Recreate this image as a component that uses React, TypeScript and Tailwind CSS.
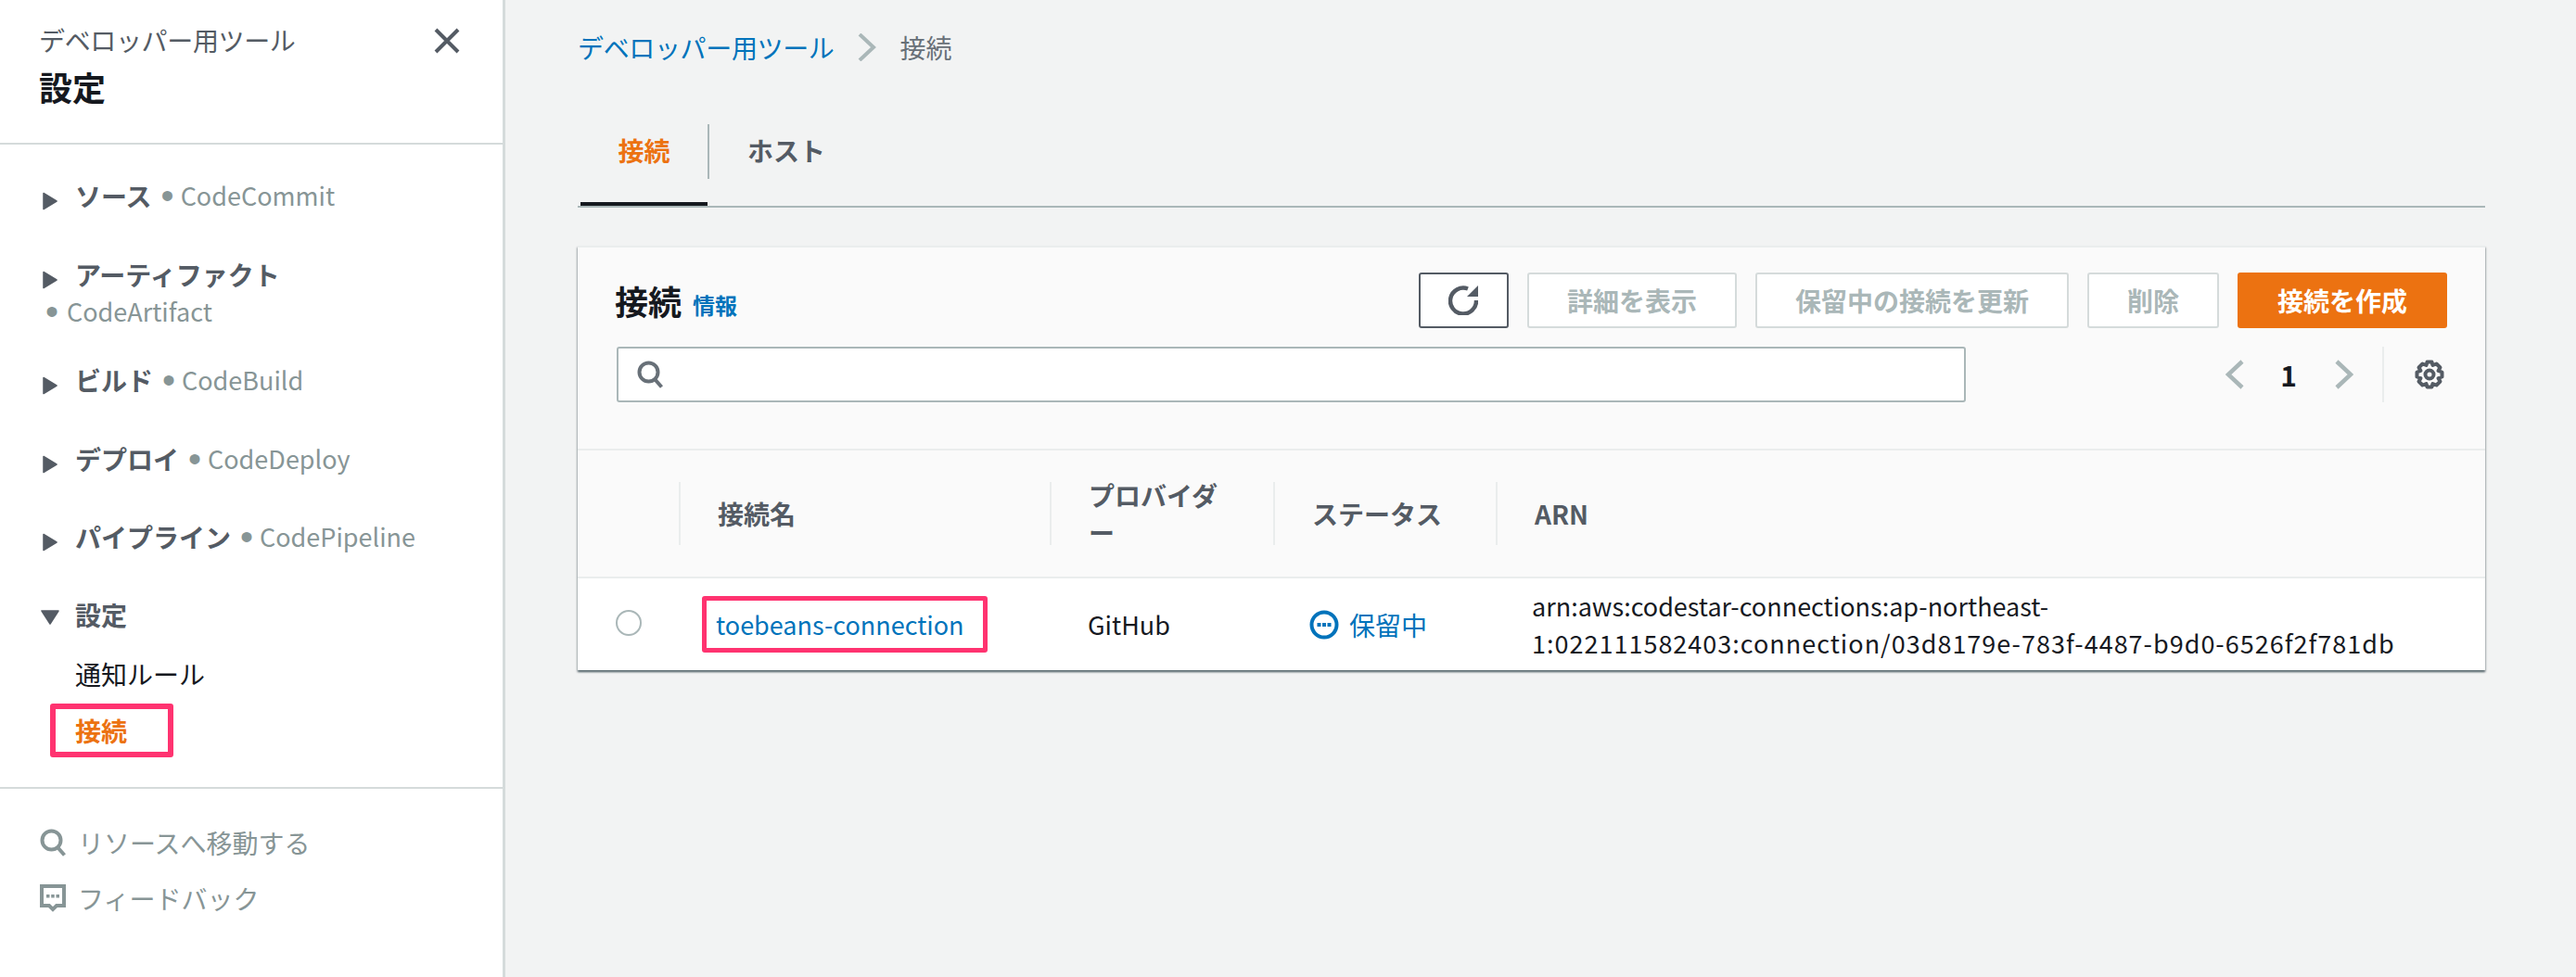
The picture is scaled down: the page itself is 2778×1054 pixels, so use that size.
import React from 'react';

const fontStack = '"Noto Sans CJK JP", "Noto Sans", sans-serif';

const navGroups = [
  { label: 'ソース', service: 'CodeCommit' },
  { label: 'アーティファクト', service: 'CodeArtifact', wrap: true },
  { label: 'ビルド', service: 'CodeBuild' },
  { label: 'デプロイ', service: 'CodeDeploy' },
  { label: 'パイプライン', service: 'CodePipeline' },
];

function CaretRight() {
  return (
    <svg viewBox="0 0 16 20" className="h-[20px] w-[16px] shrink-0 fill-[#545b64] stroke-[#545b64]" strokeWidth="1.5" strokeLinejoin="round">
      <path d="M1 1.5 L15 10 L1 18.5 Z" />
    </svg>
  );
}

function CaretDown() {
  return (
    <svg viewBox="0 0 20 16" className="h-[16px] w-[20px] shrink-0 fill-[#545b64] stroke-[#545b64]" strokeWidth="1.5" strokeLinejoin="round">
      <path d="M1 1 L19 1 L10 15 Z" />
    </svg>
  );
}

function SearchIcon({ color }: { color: string }) {
  return (
    <svg viewBox="0 0 28 30" className="h-[30px] w-[28px]" fill="none" stroke={color} strokeWidth="4">
      <circle cx="12.5" cy="12.5" r="10" />
      <path d="M19 20 L26.5 28.5" />
    </svg>
  );
}

function FeedbackIcon() {
  return (
    <svg viewBox="0 0 28 30" className="h-[30px] w-[28px]">
      <path d="M2 2 H26 V23 H18 L14 27 L10 23 H2 Z" fill="none" stroke="#879596" strokeWidth="4" />
      <rect x="7" y="11" width="3.5" height="3.5" fill="#879596" />
      <rect x="12.2" y="11" width="3.5" height="3.5" fill="#879596" />
      <rect x="17.5" y="11" width="3.5" height="3.5" fill="#879596" />
    </svg>
  );
}

function Bullet({ className }: { className: string }) {
  return <span className={`font-['Liberation_Sans'] text-[40px] leading-none ${className}`}>•</span>;
}

function Sidebar() {
  return (
    <aside className="flex w-[545px] shrink-0 flex-col border-r-[3px] border-[#d5dbdb] bg-white">
      <div className="flex h-[156px] items-start justify-between border-b-2 border-[#d5dbdb] pl-[42px] pr-[46px] pt-[23px]">
        <div>
          <div className="text-[28px] leading-[40px] tracking-[-0.35px] text-[#545b64]">デベロッパー用ツール</div>
          <div className="mt-[6px] text-[36px] font-bold leading-[48px] text-[#16191f]">設定</div>
        </div>
        <svg viewBox="0 0 28 28" className="mt-[7px] h-[28px] w-[28px]" fill="none" stroke="#545b64" strokeWidth="4">
          <path d="M2 2 L26 26 M26 2 L2 26" />
        </svg>
      </div>

      <nav className="flex flex-col gap-[44.5px] pl-[42px] pt-[35px]">
        {navGroups.map((group) => (
          <div key={group.label} className={`text-[28px] leading-[40px] ${group.wrap ? 'mb-[-10px]' : ''}`}>
            <div className="flex items-center">
              <span className="ml-[4px] mr-[19px] mt-[12px] flex">
                <CaretRight />
              </span>
              <span className="font-bold text-[#545b64]">{group.label}</span>
              {!group.wrap && (
                <span className="flex items-center text-[27px] text-[#879596]">
                  <Bullet className="ml-[10px] mr-[7px]" />
                  {group.service}
                </span>
              )}
            </div>
            {group.wrap && (
              <div className="flex items-center text-[27px] text-[#879596]">
                <Bullet className="ml-[7px] mr-[9px]" />
                {group.service}
              </div>
            )}
          </div>
        ))}
        <div className="mt-[-1px] text-[28px] leading-[40px]">
          <div className="flex items-center">
            <span className="ml-[2px] mr-[17px] mt-[6px] flex">
              <CaretDown />
            </span>
            <span className="font-bold text-[#545b64]">設定</span>
          </div>
          <div className="ml-[39px] mt-[24px] text-[#16191f]">通知ルール</div>
          <div className="ml-[12px] mt-[12px] flex h-[58px] w-[133px] items-center rounded-[3px] border-[6px] border-[#ff3370] pl-[21px] font-bold text-[#ec7211]">
            接続
          </div>
        </div>
      </nav>

      <div className="mt-[32px] flex flex-col gap-[20px] border-t-2 border-[#d5dbdb] pl-[43px] pt-[38px] text-[28px] leading-[40px] text-[#879596]">
        <div className="flex items-center gap-[13px]">
          <SearchIcon color="#879596" />
          <span>リソースへ移動する</span>
        </div>
        <div className="flex items-center gap-[13px]">
          <FeedbackIcon />
          <span>フィードバック</span>
        </div>
      </div>
    </aside>
  );
}

function ToolbarButton({ children }: { children: React.ReactNode }) {
  return (
    <button className="h-[60px] rounded-[3px] border-2 border-[#d5dbdb] bg-white px-[41px] text-[28px] font-bold leading-none text-[#aab7b8]">
      {children}
    </button>
  );
}

function HeaderCell({ children }: { children: React.ReactNode }) {
  return (
    <div className="flex h-[68px] items-center border-l-2 border-[#eaeded] pl-[40px] pr-[30px] text-[28px] font-bold leading-[40px] text-[#545b64]">
      <span>{children}</span>
    </div>
  );
}

const tableGrid = 'grid grid-cols-[109px_400px_241px_240px_1fr] items-center';

export default function App() {
  return (
    <div className="flex h-[1054px] overflow-hidden bg-[#f2f3f3]" style={{ fontFamily: fontStack }}>
      <Sidebar />
      <main className="flex-1 pl-[78px] pr-[98px]">
        <div className="flex h-[102px] items-center text-[28px] leading-[40px]">
          <span className="tracking-[-0.35px] text-[#0073bb]">デベロッパー用ツール</span>
          <svg viewBox="0 0 20 30" className="ml-[25px] mr-[26px] h-[30px] w-[20px]" fill="none" stroke="#aab7b8" strokeWidth="4">
            <path d="M2 1 L17 15 L2 29" />
          </svg>
          <span className="text-[#687078]">接続</span>
        </div>

        <div className="mt-[4px] flex h-[118px] items-start border-b-2 border-[#aab7b8] pl-[3px]">
          <div className="flex h-[116px] w-[137px] justify-center border-b-4 border-[#16191f] pt-[26px]">
            <div className="pt-[10px] text-[28px] font-bold leading-[40px] text-[#ec7211]">接続</div>
          </div>
          <div className="mt-[28px] flex h-[59px] items-center border-l-2 border-[#aab7b8] pl-[41px] pb-[4px] text-[28px] font-bold leading-[40px] text-[#545b64]">
            ホスト
          </div>
        </div>

        <section className="mt-[41px] border-t-2 border-[#eaeded] bg-white shadow-[0_2px_2px_0_rgba(0,28,36,0.5),1px_2px_2px_0_rgba(0,28,36,0.15),-1px_2px_2px_0_rgba(0,28,36,0.15)]">
          <div className="border-b-2 border-[#eaeded] bg-[#fafafa] pb-[50px] pl-[42px] pr-[41px] pt-[27px]">
            <div className="flex items-center">
              <h1 className="ml-[-2px] text-[36px] font-bold leading-[48px] text-[#16191f]">接続</h1>
              <span className="ml-[12px] mt-[10px] text-[24px] font-bold leading-[32px] text-[#0073bb]">情報</span>
              <div className="ml-auto flex gap-[20px]">
                <button className="flex h-[60px] w-[97px] items-center justify-center rounded-[3px] border-2 border-[#545b64] bg-white">
                  <svg viewBox="0 0 32 32" className="h-[32px] w-[32px]" fill="none" stroke="#545b64" strokeWidth="4.5">
                    <path d="M21 3.5 A14 14 0 1 0 30 16" />
                    <path d="M20 12 H32 V0 Z" fill="#545b64" stroke="none" />
                  </svg>
                </button>
                <ToolbarButton>詳細を表示</ToolbarButton>
                <ToolbarButton>保留中の接続を更新</ToolbarButton>
                <ToolbarButton>削除</ToolbarButton>
                <button className="h-[60px] rounded-[3px] bg-[#ec7211] px-[43px] text-[28px] font-bold leading-none text-white">
                  接続を作成
                </button>
              </div>
            </div>
            <div className="mt-[20px] flex items-center">
              <div className="flex h-[60px] w-[1455px] items-center rounded-[3px] border-2 border-[#aab7b8] bg-white pl-[20px]">
                <SearchIcon color="#687078" />
              </div>
              <svg viewBox="0 0 20 32" className="ml-[280px] h-[32px] w-[20px]" fill="none" stroke="#aab7b8" strokeWidth="4.5">
                <path d="M18 2 L3 16 L18 30" />
              </svg>
              <span className="ml-[38px] w-[20px] text-center text-[30px] font-bold leading-[40px] text-[#16191f]">1</span>
              <svg viewBox="0 0 20 32" className="ml-[40px] h-[32px] w-[20px]" fill="none" stroke="#aab7b8" strokeWidth="4.5">
                <path d="M2 2 L17 16 L2 30" />
              </svg>
              <div className="ml-[31px] h-[60px] border-l-2 border-[#eaeded]" />
              <svg viewBox="0 0 32 32" className="ml-[33px] h-[32px] w-[32px]" fill="none" stroke="#545b64" strokeWidth="4" strokeLinejoin="round">
                <circle cx="16" cy="16" r="4.5" />
                <path d="M13.5 2.5 H18.5 L19.5 6 L23.5 4.5 L27.5 8.5 L25.5 12 L29.5 13.5 V18.5 L25.5 20 L27.5 23.5 L23.5 27.5 L19.5 26 L18.5 29.5 H13.5 L12.5 26 L8.5 27.5 L4.5 23.5 L6.5 20 L2.5 18.5 V13.5 L6.5 12 L4.5 8.5 L8.5 4.5 L12.5 6 Z" />
              </svg>
            </div>
          </div>

          <div className={`${tableGrid} h-[138px] border-b-2 border-[#eaeded] bg-[#fafafa] pb-[1px]`}>
            <div />
            <HeaderCell>接続名</HeaderCell>
            <HeaderCell>
              プロバイダ
              <br />ー
            </HeaderCell>
            <HeaderCell>ステータス</HeaderCell>
            <HeaderCell>ARN</HeaderCell>
          </div>

          <div className={`${tableGrid} h-[99px] text-[28px] leading-[40px] text-[#16191f]`}>
            <div className="flex justify-center">
              <span className="mb-[4px] h-[28px] w-[28px] rounded-full border-2 border-[#aab7b8] bg-white" />
            </div>
            <div className="pl-[25px]">
              <div className="flex h-[61px] w-[308px] items-center rounded-[3px] border-[5px] border-[#ff3370] pl-[10px] text-[27px] text-[#0073bb]">
                toebeans-connection
              </div>
            </div>
            <div className="pl-[41px] text-[27px]">GitHub</div>
            <div className="flex items-center gap-[11px] pl-[39px] text-[#0073bb]">
              <svg viewBox="0 0 32 32" className="h-[32px] w-[32px]" fill="none" stroke="#0073bb" strokeWidth="4">
                <circle cx="16" cy="16" r="13.5" />
                <rect x="8.5" y="14" width="4" height="4" fill="#0073bb" stroke="none" />
                <rect x="14" y="14" width="4" height="4" fill="#0073bb" stroke="none" />
                <rect x="19.5" y="14" width="4" height="4" fill="#0073bb" stroke="none" />
              </svg>
              <span>保留中</span>
            </div>
            <div className="pl-[39px] text-[27px]">
              <div>arn:aws:codestar-connections:ap-northeast-</div>
              <div className="tracking-[1px]">1:022111582403:connection/03d8179e-783f-4487-b9d0-6526f2f781db</div>
            </div>
          </div>
        </section>
      </main>
    </div>
  );
}
